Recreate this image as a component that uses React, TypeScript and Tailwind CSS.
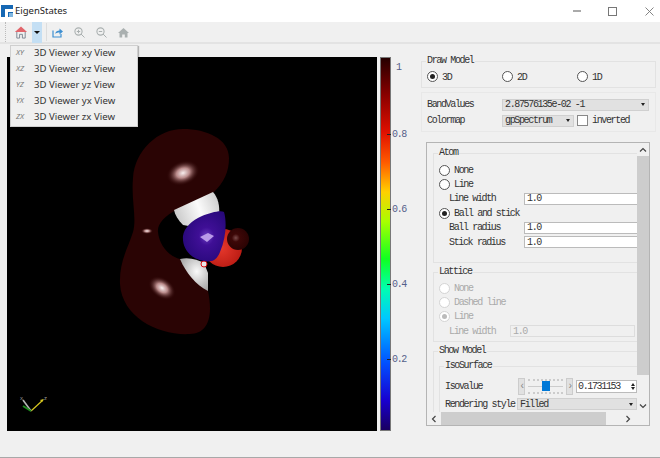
import React from 'react';

const mono = "font-['Liberation_Mono',monospace] text-[10px] tracking-[-1.35px] text-[#333]";

const views = ['xy', 'xz', 'yz', 'yx', 'zx'];

const Radio = ({ checked, disabled }: { checked?: boolean; disabled?: boolean }) => (
  <span
    className={`flex w-[11px] h-[11px] shrink-0 items-center justify-center rounded-full border bg-white ${
      disabled ? 'border-[#d4d4d4]' : 'border-[#555]'
    }`}
  >
    {checked && <span className={`w-[5px] h-[5px] rounded-full ${disabled ? 'bg-[#bbb]' : 'bg-[#222]'}`} />}
  </span>
);

const RadioRow = ({ label, checked, disabled }: { label: string; checked?: boolean; disabled?: boolean }) => (
  <div className={`flex h-[14.4px] items-center gap-[4px] ${disabled ? 'text-[#aaa]' : ''}`}>
    <Radio checked={checked} disabled={disabled} />
    <span>{label}</span>
  </div>
);

const InputRow = ({ label, disabled }: { label: string; disabled?: boolean }) => (
  <div className={`flex h-[14.4px] items-center pl-[10px] ${disabled ? 'text-[#aaa]' : ''}`}>
    <span className={`shrink-0 ${disabled ? 'w-[61px]' : 'w-[75px]'}`}>{label}</span>
    <div
      className={`flex h-[12px] w-[125px] shrink-0 items-center border pl-[2px] ${
        disabled ? 'border-[#ddd] bg-[#f0f0f0]' : 'border-[#bbb] bg-white text-[#333]'
      }`}
    >
      1.0
    </div>
  </div>
);

const Group = ({ title, className, children }: { title: string; className?: string; children: React.ReactNode }) => (
  <fieldset className={`border border-[#e2e2e2] ${className ?? ''}`}>
    <legend className="ml-[-1px] px-[1px] leading-[10px]">{title}</legend>
    {children}
  </fieldset>
);

const Select = ({ value, className }: { value: string; className?: string }) => (
  <div className={`flex h-[12px] shrink-0 items-center justify-between bg-[#e1e1e1] border border-[#d0d0d0] pl-[2px] pr-[3px] ${className ?? ''}`}>
    <span>{value}</span>
    <span className="border-x-[2.5px] border-t-[3px] border-x-transparent border-t-[#222]" />
  </div>
);

const Chevron = ({ d, className }: { d: string; className?: string }) => (
  <svg width="8" height="8" viewBox="0 0 8 8" className={className}>
    <path d={d} fill="none" stroke="#444" strokeWidth="1.2" />
  </svg>
);

const HomeIcon = () => (
  <svg width="14" height="14" viewBox="0 0 15 15">
    <path d="M3 7v7h3v-4h3v4h3V7" fill="none" stroke="#7a8490" strokeWidth="1" />
    <path d="M7.5 1.5L14 7.5H1z" fill="#e2656b" />
  </svg>
);

const ToolIcons = () => (
  <>
    <svg width="11" height="11" viewBox="0 0 11 11">
      <path d="M1 3.5v6.5h8V7" fill="none" stroke="#3d8fd1" strokeWidth="1.2" />
      <path d="M3 7c.5-2.5 2.5-3.5 4.5-3.5V1.5L11 4.5 7.5 7.5V5.5C5.5 5.5 4 6 3 7z" fill="#3d8fd1" />
    </svg>
    <svg width="11" height="11" viewBox="0 0 11 11" className="ml-[11px]">
      <circle cx="4.5" cy="4.5" r="3.6" fill="none" stroke="#aab0b0" strokeWidth="1.1" />
      <path d="M7 7l3.5 3.5M2.8 4.5h3.4M4.5 2.8v3.4" stroke="#aab0b0" strokeWidth="1" />
    </svg>
    <svg width="11" height="11" viewBox="0 0 11 11" className="ml-[11px]">
      <circle cx="4.5" cy="4.5" r="3.6" fill="none" stroke="#aab0b0" strokeWidth="1.1" />
      <path d="M7 7l3.5 3.5M2.8 4.5h3.4" stroke="#aab0b0" strokeWidth="1" />
    </svg>
    <svg width="11" height="11" viewBox="0 0 11 11" className="ml-[11px]">
      <path d="M5.5 1L11 6H9.5v4.5H6.8V7.5H4.2v3H1.5V6H0z" fill="#aab0b0" />
    </svg>
  </>
);

const Scene = () => (
  <svg viewBox="7 57 370 374" className="block w-full h-full">
    <defs>
      <radialGradient id="hl">
        <stop offset="0" stopColor="#f8eeee" />
        <stop offset="0.4" stopColor="#b98a8a" />
        <stop offset="1" stopColor="#2e0505" stopOpacity="0" />
      </radialGradient>
      <radialGradient id="blue" cx="0.55" cy="0.5" r="0.6">
        <stop offset="0" stopColor="#6a3cc0" />
        <stop offset="0.3" stopColor="#3f0f96" />
        <stop offset="1" stopColor="#27087a" />
      </radialGradient>
      <radialGradient id="red" cx="0.45" cy="0.5" r="0.6">
        <stop offset="0" stopColor="#e6382c" />
        <stop offset="1" stopColor="#b81a12" />
      </radialGradient>
      <linearGradient id="white" x1="0" y1="0.6" x2="1" y2="0.3">
        <stop offset="0" stopColor="#c8c8c8" />
        <stop offset="0.55" stopColor="#fbfbfb" />
        <stop offset="1" stopColor="#cfcfcf" />
      </linearGradient>
      <radialGradient id="cone" cx="0.6" cy="0.4" r="0.7">
        <stop offset="0" stopColor="#fafafa" />
        <stop offset="1" stopColor="#a0a0a0" />
      </radialGradient>
      <radialGradient id="cap" cx="0.4" cy="0.45" r="0.6">
        <stop offset="0" stopColor="#7a4a4a" />
        <stop offset="0.3" stopColor="#3d0707" />
        <stop offset="1" stopColor="#2a0303" />
      </radialGradient>
    </defs>
    <path
      d="M183 129C207 129 229 139 229 158C229 172 224 182 214 192L176 210C165 216 157 224 158 232C159 244 168 256 180 259L208 291C214 320 206 334 190 334C160 336 122 318 120 284C119 262 128 248 133 232C137 218 131 200 133 178C135 150 158 129 183 129Z"
      fill="#2a0404"
    />
    <ellipse cx="183" cy="173" rx="17" ry="12" fill="url(#hl)" transform="rotate(-20 183 173)" />
    <ellipse cx="147" cy="231" rx="6" ry="3" fill="url(#hl)" />
    <ellipse cx="162" cy="288" rx="15" ry="10" fill="url(#hl)" transform="rotate(35 162 288)" />
    <path d="M174 210L213 192C218 198 220 205 219 216L200 228L183 225C178 220 175 215 174 210Z" fill="url(#white)" />
    <path d="M180 259C190 257 198 260 204 263L208 273L208 291C196 285 186 273 180 259Z" fill="url(#cone)" />
    <circle cx="223" cy="248" r="19" fill="url(#red)" />
    <circle cx="238" cy="239" r="11" fill="url(#cap)" />
    <circle cx="204" cy="264" r="3" fill="#e8e8e8" stroke="#e01010" strokeWidth="1" />
    <path d="M224 212C227 222 226 238 220 252C216 262 210 262 204 261C190 259 182 248 183 236C184 228 192 220 202 216C210 213 220 210 224 212Z" fill="url(#blue)" />
    <path d="M200 237L208 233L214 236L207 242Z" fill="#b99ae8" />
    <path d="M31 411L43 400" stroke="#d8c820" strokeWidth="1.2" />
    <path d="M44 399l-4 1 2 2z" fill="#d8c820" />
    <path d="M31 411L23 400" stroke="#b5b5b5" strokeWidth="1.6" />
    <path d="M31 411L23 406" stroke="#1d8a1d" strokeWidth="2" />
    <text x="44" y="400" fontSize="6" fill="#999" fontFamily="Liberation Sans, sans-serif">z</text>
    <text x="20" y="400" fontSize="6" fill="#999" fontFamily="Liberation Sans, sans-serif">x</text>
  </svg>
);

const ColorLabel = ({ value, className }: { value: string; className: string }) => (
  <span className={`absolute left-[-4px] flex items-center ${className}`}>
    <span className="mr-[1px] h-[1px] w-[4px] bg-[#222]" />
    {value}
  </span>
);

const App: React.FC = () => {
  return (
    <div className={`relative flex h-[458px] w-[660px] flex-col overflow-hidden bg-[#f0f0f0] ${mono}`}>
      {/* Title bar */}
      <div className="flex h-[22px] shrink-0 items-center bg-white pl-[1px] pr-[6px]">
        <svg width="12" height="12" viewBox="0 0 12 12">
          <rect width="12" height="12" fill="#1668b4" />
          <path d="M4 4h8v3H7v5H4z" fill="#fff" />
          <rect x="8" y="8" width="4" height="4" fill="#7fb6e0" />
        </svg>
        <span className="ml-[2px] font-['Noto_Sans',sans-serif] text-[9.5px] tracking-normal text-[#222]">EigenStates</span>
        <div className="ml-auto flex items-center">
          <span className="h-[2px] w-[8px] bg-[#aaa]" />
          <span className="ml-[27px] h-[9px] w-[9px] border border-[#777]" />
          <svg width="9" height="9" viewBox="0 0 9 9" className="ml-[28px]">
            <path d="M0.5 0.5l8 8M8.5 0.5l-8 8" stroke="#777" strokeWidth="0.9" />
          </svg>
        </div>
      </div>

      {/* Toolbar */}
      <div className="flex h-[22px] shrink-0 items-center border-b-2 border-[#e3e3e3] pl-[5px]">
        <span className="h-[20px] border-l border-dotted border-[#bbb]" />
        <div className="ml-[4px] flex h-[21px] items-center">
          <div className="flex h-full w-[22px] items-center justify-center">
            <HomeIcon />
          </div>
          <div className="flex h-full w-[10px] items-center justify-center bg-[#c4dff4]">
            <span className="border-x-[3px] border-t-[3px] border-x-transparent border-t-[#111]" />
          </div>
        </div>
        <span className="ml-[4px] h-[18px] border-l border-[#ddd]" />
        <div className="ml-[5px] flex items-center">
          <ToolIcons />
        </div>
      </div>

      {/* Dropdown of views */}
      <div className="absolute left-[10px] top-[45px] z-10 h-[82px] w-[128px] border border-[#cfcfcf] bg-[#f0f0f0] shadow-[1px_1px_1px_rgba(0,0,0,0.25)]">
        <div className="-mt-[1px]">
          {views.map((v) => (
            <div key={v} className="flex h-[16px] items-center font-['Noto_Sans',sans-serif] text-[9.6px] tracking-normal text-[#333]">
              <span className="w-[23px] pl-[5px] text-[7.5px] italic text-[#777]">{v.toUpperCase()}</span>
              <span>3D Viewer {v} View</span>
            </div>
          ))}
        </div>
      </div>

      {/* Main */}
      <div className="flex min-h-0 flex-1 pl-[7px] pt-[13px]">
        <div className="h-[374px] w-[370px] shrink-0 bg-black">
          <Scene />
        </div>
        <div className="relative ml-[3px] h-[374px] w-[11px] shrink-0 border border-[#777] bg-[linear-gradient(to_bottom,#250000_0%,#8a0000_10%,#e01000_20%,#ff5a00_28%,#ffd000_36%,#a8ff00_44%,#10ff20_54%,#00ffb0_62%,#00c8ff_70%,#0050ff_82%,#1800d0_92%,#1a0060_100%)]" />
        <div className="relative w-[30px] shrink-0 text-[#55608a]">
          <span className="absolute left-[5px] top-[3px]">1</span>
          <ColorLabel value="0.8" className="top-[70px]" />
          <ColorLabel value="0.6" className="top-[145px]" />
          <ColorLabel value="0.4" className="top-[220px]" />
          <ColorLabel value="0.2" className="top-[295px]" />
        </div>

        {/* Right panel */}
        <div className="flex w-[235px] shrink-0 flex-col">
          <Group title="Draw Model" className="h-[32px] shrink-0 pl-[5px] pt-[3px] -mt-[1px]">
            <div className="flex h-[16px] items-center">
              <div className="w-[75px]"><RadioRow label="3D" checked /></div>
              <div className="w-[75px]"><RadioRow label="2D" /></div>
              <RadioRow label="1D" />
            </div>
          </Group>
          <div className="mt-[4px] flex h-[40px] shrink-0 flex-col gap-[1px] border border-[#e8e8e8] pl-[5px] pt-[4px]">
            <div className="flex items-center">
              <span className="w-[75px]">BandValues</span>
              <Select value="2.87576135e-02 -1" className="w-[147px]" />
            </div>
            <div className="flex items-center">
              <span className="w-[75px]">Colormap</span>
              <Select value="gpSpectrum" className="w-[72px]" />
              <span className="ml-[3px] h-[11px] w-[11px] border border-[#888] bg-white" />
              <span className="ml-[4px]">inverted</span>
            </div>
          </div>

          {/* Scroll area */}
          <div className="ml-[5px] mt-[10px] grid h-[284px] w-[224px] shrink-0 grid-cols-[1fr_12px] grid-rows-[1fr_13px] border border-[#b4b4b4]">
            <div className="min-h-0 overflow-hidden pl-[6px] pt-[5px]">
              <div className="w-[240px]">
                <Group title="Atom" className="h-[115px] pl-[5px] pt-[5px]">
                  <RadioRow label="None" />
                  <RadioRow label="Line" />
                  <InputRow label="Line width" />
                  <RadioRow label="Ball and stick" checked />
                  <InputRow label="Ball radius" />
                  <InputRow label="Stick radius" />
                </Group>
                <Group title="Lattice" className="mt-[4px] h-[75px] pl-[5px] pt-[4px]">
                  <RadioRow label="None" disabled />
                  <RadioRow label="Dashed line" disabled />
                  <RadioRow label="Line" checked disabled />
                  <InputRow label="Line width" disabled />
                </Group>
                <Group title="Show Model" className="mt-[4px] pl-[5px] pt-[5px]">
                  <Group title="IsoSurface" className="h-[60px] pl-[5px] pt-[6px]">
                    <div className="flex h-[18px] items-center">
                      <span className="w-[73px] shrink-0">Isovalue</span>
                      <span className="flex h-[17px] w-[7px] shrink-0 items-center justify-center border border-[#ccc] bg-[#e1e1e1] text-[#888]">‹</span>
                      <div className="relative mx-[3px] h-[17px] w-[35px] shrink-0">
                        <span className="absolute left-0 right-0 top-[1px] border-t-2 border-dotted border-[#ccc]" />
                        <span className="absolute left-0 right-0 top-[8px] h-[1px] bg-[#ccc]" />
                        <span className="absolute left-0 right-0 bottom-[1px] border-t-2 border-dotted border-[#ccc]" />
                        <span className="absolute left-[14px] top-[3px] h-[10px] w-[8px] bg-[#0078d7]" />
                      </div>
                      <span className="flex h-[17px] w-[7px] shrink-0 items-center justify-center border border-[#ccc] bg-[#e1e1e1] text-[#888]">›</span>
                      <div className="ml-[3px] flex h-[13px] w-[61px] shrink-0 items-center justify-between border border-[#bbb] bg-white pl-[1px]">
                        <span>0.1731153</span>
                        <span className="flex flex-col gap-[1px] pr-[1px]">
                          <span className="border-x-[2.5px] border-b-[3px] border-x-transparent border-b-[#222]" />
                          <span className="border-x-[2.5px] border-t-[3px] border-x-transparent border-t-[#222]" />
                        </span>
                      </div>
                    </div>
                    <div className="mt-[2px] flex h-[14px] items-center">
                      <span className="w-[73px] shrink-0">Rendering style</span>
                      <Select value="Filled" className="ml-[-1px] w-[120px]" />
                    </div>
                  </Group>
                </Group>
              </div>
            </div>
            <div className="row-span-2 flex flex-col items-center">
              <Chevron d="M1 5.5L4 2.5L7 5.5" className="my-[2.5px]" />
              <div className="h-[219px] w-full shrink-0 bg-[#cdcdcd]" />
              <Chevron d="M1 2.5L4 5.5L7 2.5" className="mt-auto mb-[15px]" />
            </div>
            <div className="flex items-center">
              <Chevron d="M5.5 1L2.5 4L5.5 7" className="ml-[3px]" />
              <div className="ml-[3px] h-full w-[165px] bg-[#cdcdcd]" />
              <Chevron d="M2.5 1L5.5 4L2.5 7" className="ml-auto mr-[5px]" />
            </div>
          </div>
        </div>
      </div>

      {/* Bottom edge */}
      <div className="h-[1px] shrink-0 bg-[#a8a8a8]" />
    </div>
  );
};

export default App;
